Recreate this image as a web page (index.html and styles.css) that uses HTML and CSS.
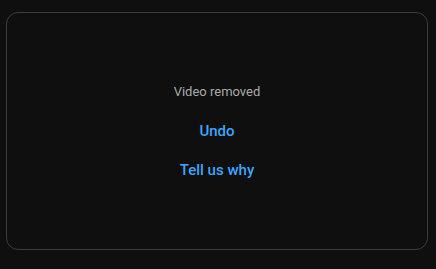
FILE: index.html
```html
<!DOCTYPE html>
<html lang="en">
  <head>
    <meta charset="UTF-8" />
    <meta name="viewport" content="width=device-width, initial-scale=1.0" />
    <title>Video removed</title>
    <link rel="stylesheet" href="styles.css">
  </head>
  <body>
    <div class="card">
      <div class="message">Video removed</div>
      <button class="link">Undo</button>
      <button class="link">Tell us why</button>
    </div>
  </body>
</html>
```

FILE: styles.css
```css
body {
  font-family: Roboto, Arial, sans-serif;
  background-color: #0f0f0f;
  margin: 0;
  padding: 12px 8px 0 6px;
}
.card {
  box-sizing: border-box;
  width: 422px;
  height: 238px;
  border: 1px solid #3d3d3d;
  border-radius: 12px;
  display: flex;
  flex-direction: column;
  align-items: center;
  justify-content: center;
  gap: 20px;
}
.message {
  font-size: 13px;
  line-height: 20px;
  color: #aaaaaa;
}
.link {
  font-family: Roboto, Arial, sans-serif;
  font-size: 15px;
  font-weight: 500;
  line-height: 20px;
  color: #3ea6ff;
  background: none;
  border: none;
  padding: 0;
  margin-top: -1px;
  cursor: pointer;
}
```
